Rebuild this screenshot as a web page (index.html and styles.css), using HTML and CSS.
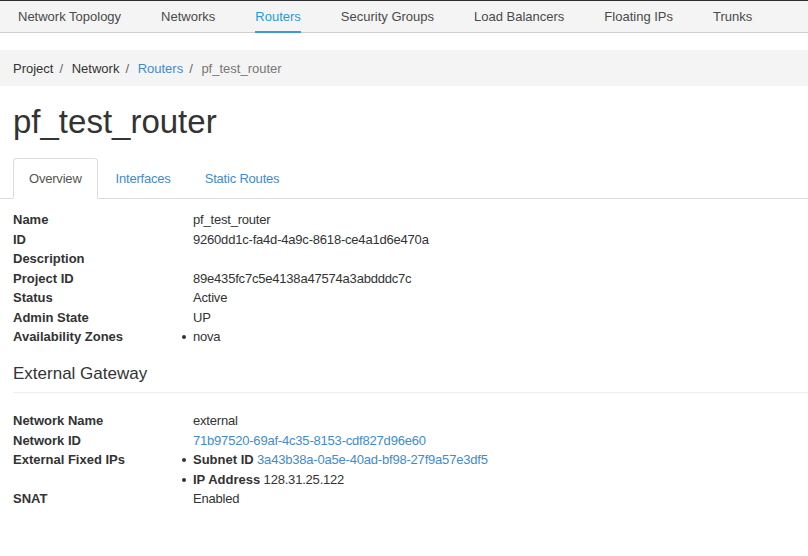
FILE: index.html
```html
<!DOCTYPE html>
<html>
<head>
<meta charset="utf-8">
<link rel="stylesheet" href="styles.css">
</head>
<body>
<nav class="topnav">
  <ul class="topnav-list">
    <li><a href="#">Network Topology</a></li>
    <li><a href="#">Networks</a></li>
    <li><a href="#" class="active">Routers</a></li>
    <li><a href="#">Security Groups</a></li>
    <li><a href="#">Load Balancers</a></li>
    <li><a href="#">Floating IPs</a></li>
    <li><a href="#">Trunks</a></li>
  </ul>
</nav>
<ol class="breadcrumb">
  <li>Project</li>
  <li>Network</li>
  <li><a href="#">Routers</a></li>
  <li class="current">pf_test_router</li>
</ol>
<h1 class="page-title">pf_test_router</h1>
<ul class="tabs">
  <li class="tab active"><a href="#">Overview</a></li>
  <li class="tab"><a href="#">Interfaces</a></li>
  <li class="tab"><a href="#">Static Routes</a></li>
</ul>
<div class="tab-content">
  <dl class="details">
    <dt>Name</dt><dd>pf_test_router</dd>
    <dt>ID</dt><dd>9260dd1c-fa4d-4a9c-8618-ce4a1d6e470a</dd>
    <dt>Description</dt><dd></dd>
    <dt>Project ID</dt><dd>89e435fc7c5e4138a47574a3abdddc7c</dd>
    <dt>Status</dt><dd>Active</dd>
    <dt>Admin State</dt><dd>UP</dd>
    <dt>Availability Zones</dt><dd><ul class="bullets"><li>nova</li></ul></dd>
  </dl>
  <h4 class="section-title">External Gateway</h4>
  <hr class="divider">
  <dl class="details">
    <dt>Network Name</dt><dd>external</dd>
    <dt>Network ID</dt><dd><a href="#">71b97520-69af-4c35-8153-cdf827d96e60</a></dd>
    <dt>External Fixed IPs</dt>
    <dd>
      <ul class="bullets">
        <li><strong>Subnet ID</strong> <a href="#">3a43b38a-0a5e-40ad-bf98-27f9a57e3df5</a></li>
        <li><strong>IP Address</strong> 128.31.25.122</li>
      </ul>
    </dd>
    <dt>SNAT</dt><dd>Enabled</dd>
  </dl>
</div>
</body>
</html>
```

FILE: styles.css
```css
* { box-sizing: border-box; }
html, body { margin: 0; padding: 0; background: #fff; }
body {
  font-family: "Liberation Sans", Arial, Helvetica, sans-serif;
  font-size: 13px;
  line-height: 1.5;
  color: #333;
}
a { color: #428bca; text-decoration: none; }

.topnav {
  background: #f4f4f4;
  border-top: 1px solid #2f2f2f;
  border-bottom: 1px solid #cfcfcf;
  height: 33px;
}
.topnav-list {
  list-style: none;
  margin: 0;
  padding: 0 0 0 18px;
  display: flex;
  gap: 40px;
  height: 100%;
}
.topnav-list li { display: flex; }
.topnav-list a {
  color: #4a4a4a;
  display: flex;
  align-items: center;
  height: 32px;
  padding-top: 2px;
  border-bottom: 2px solid transparent;
  margin-bottom: -1px;
}
.topnav-list a.active {
  color: #1f9bd8;
  border-bottom-color: #3a9ad9;
}

.breadcrumb {
  list-style: none;
  margin: 17px 0 0;
  padding: 9px 13px 7px;
  height: 36px;
  background: #f4f4f4;
  display: flex;
}
.breadcrumb li { color: #333; }
.breadcrumb li + li::before {
  content: "/\00a0";
  padding: 0 5px 0 6px;
  color: #666;
}
.breadcrumb li.current { color: #777; }

.page-title {
  font-size: 33px;
  font-weight: normal;
  line-height: 1.1;
  margin: 18px 0 0 13px;
  color: #333;
}

.tabs {
  list-style: none;
  margin: 18px 0 0;
  padding: 0 0 0 13px;
  display: flex;
  border-bottom: 1px solid #ddd;
  letter-spacing: -0.2px;
}
.tab { margin-bottom: -1px; margin-right: 2px; }
.tab a {
  display: block;
  padding: 10px 15px;
  border: 1px solid transparent;
  border-radius: 4px 4px 0 0;
  line-height: 19px;
}
.tab.active a {
  color: #555;
  background: #fff;
  border-color: #ddd;
  border-bottom-color: #fff;
}

.tab-content { padding: 11px 0 0 13px; }

.details {
  display: grid;
  grid-template-columns: 180px 1fr;
  margin: 0;
  line-height: 19.5px;
}
.details dt { font-weight: bold; grid-column: 1; }
.details dd {
  margin: 0;
  grid-column: 2;
  min-height: 19.5px;
  letter-spacing: -0.2px;
}

.bullets {
  margin: 0;
  padding: 0;
  list-style: none;
}
.bullets li { position: relative; }
.bullets li::before {
  content: "";
  position: absolute;
  left: -11px;
  top: 8px;
  width: 4px;
  height: 4px;
  border-radius: 50%;
  background: #333;
}
.bullets strong { letter-spacing: 0; }

.section-title {
  font-size: 17px;
  font-weight: normal;
  line-height: 1.1;
  margin: 18px 0 0;
  color: #333;
}
.divider {
  border: 0;
  border-top: 1px solid #eee;
  margin: 9px 0 18px;
}
```
